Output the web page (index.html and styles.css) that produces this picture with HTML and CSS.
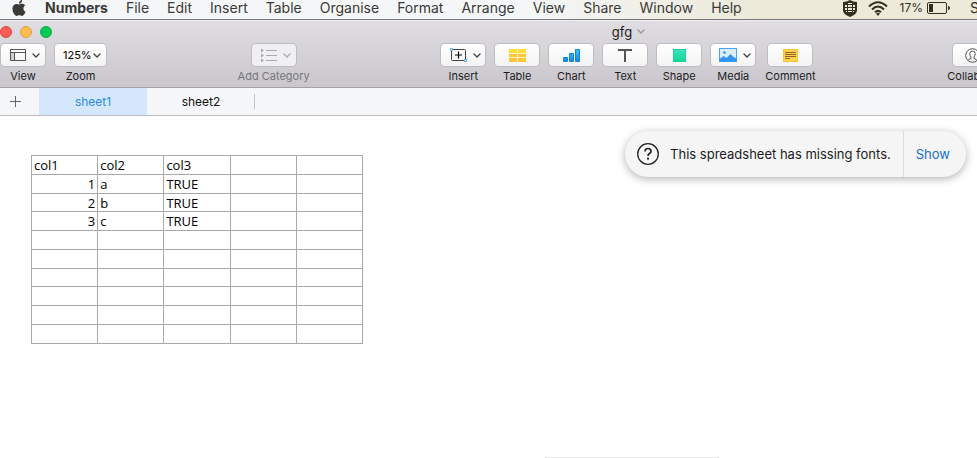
FILE: index.html
```
<!DOCTYPE html>
<html lang="en">
<head>
  <meta charset="UTF-8" />
  <meta name="viewport" content="width=device-width, initial-scale=1.0"/>
  <title>gfg</title>
  <link rel="stylesheet" href="styles.css">
</head>
<body>
  <svg class="defs" width="0" height="0">
    <symbol id="chevron" viewBox="0 0 8 5">
      <path d="M1 1 L4 4 L7 1" fill="none" stroke="currentColor" stroke-width="1.4" stroke-linecap="round" stroke-linejoin="round"/>
    </symbol>
  </svg>

  <nav class="menubar">
    <button class="menu apple" aria-label="Apple">
      <svg width="16" height="16" viewBox="0 0 24 24" fill="currentColor">
        <path d="M12.152 6.896c-.948 0-2.415-1.078-3.96-1.04-2.04.027-3.91 1.183-4.961 3.014-2.117 3.675-.546 9.103 1.519 12.09 1.013 1.454 2.208 3.09 3.792 3.039 1.52-.065 2.09-.987 3.935-.987 1.831 0 2.35.987 3.96.948 1.637-.026 2.676-1.48 3.676-2.948 1.156-1.688 1.636-3.325 1.662-3.415-.039-.013-3.182-1.221-3.22-4.857-.026-3.04 2.48-4.494 2.597-4.559-1.429-2.09-3.623-2.324-4.39-2.376-2-.156-3.675 1.09-4.61 1.09zM15.53 3.83c.843-1.012 1.4-2.427 1.245-3.83-1.207.052-2.662.805-3.532 1.818-.78.896-1.454 2.338-1.273 3.714 1.338.104 2.715-.688 3.559-1.701"/>
      </svg>
    </button>
    <button class="menu app-name">Numbers</button>
    <button class="menu">File</button>
    <button class="menu">Edit</button>
    <button class="menu">Insert</button>
    <button class="menu">Table</button>
    <button class="menu">Organise</button>
    <button class="menu">Format</button>
    <button class="menu">Arrange</button>
    <button class="menu">View</button>
    <button class="menu">Share</button>
    <button class="menu">Window</button>
    <button class="menu">Help</button>

    <div class="status">
      <svg width="14" height="17" viewBox="0 0 14 17">
        <path d="M7 0 Q10 2 14 2 V10.500 Q14 14 7 17 Q0 14 0 10.500 V2 Q4 2 7 0Z" fill="#33301f"/>
        <path d="M2 5h2v2H2z M5 5h4v2H5z M10 5h2v2h-2z M2 8h2v2H2z M5 8h4v2H5z M10 8h2v2h-2z M3 11h1v1H3z M5 11h4v1H5z M10 11h1v1h-1z M5 3h4v1H5z" fill="#ece8d6"/>
      </svg>
      <svg class="wifi" width="20" height="15" viewBox="0 0 20 15" fill="none" stroke="#33301f" stroke-width="2">
        <path d="M1 5.5 Q10 -3 19 5.5 M4 8.5 Q10 2.5 16 8.5 M7 11.3 Q10 8.5 13 11.3"/>
        <path d="M8 12.5 Q10 11 12 12.5 L10 15Z" fill="#33301f" stroke="none"/>
      </svg>
      <span class="percent">17%</span>
      <svg class="battery" width="23" height="12" viewBox="0 0 23 12">
        <rect x="0.5" y="0.5" width="19" height="11" rx="1.5" fill="none" stroke="#33301f"/>
        <rect x="2" y="2" width="4" height="8" fill="#33301f"/>
        <path d="M21 4 Q23 4 23 6 Q23 8 21 8Z" fill="#33301f"/>
      </svg>
      <span class="clock">S</span>
    </div>
  </nav>

  <header class="window-head">
    <div class="titlebar">
      <div class="lights">
        <button class="light close" aria-label="Close"></button>
        <button class="light minimise" aria-label="Minimise"></button>
        <button class="light zoom" aria-label="Full screen"></button>
      </div>
      <button class="doc-title">gfg <svg width="8" height="5"><use href="#chevron"/></svg></button>
    </div>

    <div class="toolbar">
      <div class="group">
        <div class="tool">
          <button id="view" class="tool-button dropdown">
            <svg width="16" height="12" viewBox="0 0 16 12">
              <rect x="1" y="4" width="3" height="7" fill="#cfcfcf"/>
              <path d="M0.5 0.5h15v11h-15z M0.5 3.5h15 M4.5 3.5v8" fill="none" stroke="#555"/>
            </svg>
            <svg class="chevron" width="8" height="5"><use href="#chevron"/></svg>
          </button>
          <label for="view">View</label>
        </div>
        <div class="tool">
          <div class="zoom-box">
            <select id="zoom" class="tool-button">
              <option>125%</option>
            </select>
            <svg class="chevron" width="8" height="5"><use href="#chevron"/></svg>
          </div>
          <label for="zoom">Zoom</label>
        </div>
      </div>

      <div class="tool disabled">
        <button id="category" class="tool-button dropdown" disabled>
          <svg width="16" height="14" viewBox="0 0 16 14">
            <path d="M5 2.5h11 M5 7.5h11 M5 12.5h11" stroke="#aaa"/>
            <path d="M0 0.5l3 2l-3 2z M0 5.5l3 2l-3 2z M0 10.5l3 2l-3 2z" fill="#aaa"/>
          </svg>
          <svg class="chevron" width="8" height="5"><use href="#chevron"/></svg>
        </button>
        <label for="category">Add Category</label>
      </div>

      <div class="group">
        <div class="tool">
          <button id="insert" class="tool-button dropdown">
            <svg width="17" height="14" viewBox="0 0 17 14">
              <rect x="1.5" y="1.5" width="14" height="11" rx="1" fill="none" stroke="#444"/>
              <path d="M8.5 3.5v7 M5 7h7" stroke="#000" stroke-width="1.2"/>
              <circle cx="1.5" cy="1.5" r="1.2" fill="#fff" stroke="#1a8cf0"/>
              <circle cx="15.5" cy="12.5" r="1.2" fill="#fff" stroke="#1a8cf0"/>
            </svg>
            <svg class="chevron" width="8" height="5"><use href="#chevron"/></svg>
          </button>
          <label for="insert">Insert</label>
        </div>
        <div class="tool">
          <button id="table" class="tool-button">
            <svg width="17" height="13" viewBox="0 0 17 13">
              <rect width="17" height="13" fill="#fcc53a"/>
              <rect width="17" height="5" fill="#fddc38"/>
              <path d="M0 4.5h17 M0 8.5h17 M8.5 0v13" stroke="#fff3bd"/>
            </svg>
          </button>
          <label for="table">Table</label>
        </div>
        <div class="tool">
          <button id="chart" class="tool-button">
            <svg width="17" height="13" viewBox="0 0 17 13">
              <linearGradient id="bars" x1="0" y1="0" x2="0" y2="13" gradientUnits="userSpaceOnUse">
                <stop offset="0" stop-color="#3fc4f8"/>
                <stop offset="1" stop-color="#0d86e6"/>
              </linearGradient>
              <path d="M0.5 8.5h4v4h-4z M6.5 4.5h4v8h-4z M12.5 0.5h4v12h-4z" fill="url(#bars)" stroke="#1587d6"/>
            </svg>
          </button>
          <label for="chart">Chart</label>
        </div>
        <div class="tool">
          <button id="text" class="tool-button">
            <svg width="14" height="13" viewBox="0 0 14 13">
              <path d="M0 1h14 M7 1v12" fill="none" stroke="#555" stroke-width="2"/>
            </svg>
          </button>
          <label for="text">Text</label>
        </div>
        <div class="tool">
          <button id="shape" class="tool-button">
            <svg width="13" height="13" viewBox="0 0 13 13">
              <linearGradient id="green" x1="0" y1="0" x2="0" y2="1">
                <stop offset="0" stop-color="#3fe0be"/>
                <stop offset="1" stop-color="#13d894"/>
              </linearGradient>
              <rect x="0.5" y="0.5" width="12" height="12" fill="url(#green)" stroke="#20cf9c"/>
            </svg>
          </button>
          <label for="shape">Shape</label>
        </div>
        <div class="tool">
          <button id="media" class="tool-button dropdown">
            <svg width="18" height="14" viewBox="0 0 18 14">
              <rect x="0.5" y="0.5" width="17" height="13" fill="#dceefd" stroke="#4aa3f5"/>
              <path d="M0.5 13.5V11l4-3 3 2 4-4 3 3 3 1.5v3z" fill="#2f93f7"/>
              <circle cx="5.5" cy="4.5" r="1.5" fill="#4aa3f5"/>
            </svg>
            <svg class="chevron" width="8" height="5"><use href="#chevron"/></svg>
          </button>
          <label for="media">Media</label>
        </div>
        <div class="tool">
          <button id="comment" class="tool-button">
            <svg width="15" height="13" viewBox="0 0 15 13">
              <rect x="0.5" y="0.5" width="14" height="12" fill="#fed24a" stroke="#f3c33b"/>
              <path d="M2 3.5h11 M2 5.5h11 M2 7.5h11 M2 9.5h5" stroke="#94642a"/>
            </svg>
          </button>
          <label for="comment">Comment</label>
        </div>
      </div>

      <div class="tool">
        <button id="collaborate" class="tool-button dropdown">
          <svg width="15" height="15" viewBox="0 0 15 15" fill="none" stroke="#555">
            <circle cx="7.5" cy="7.5" r="6.8"/>
            <path d="M3 12.5 Q3.5 11 6 10.5 V9 Q4.8 7.500 4.800 5.500 Q5 3 7.500 3 Q10 3 10.200 5.500 Q10.200 7.500 9 9 V10.500 Q11.500 11 12 12.500"/>
          </svg>
          <svg class="chevron" width="8" height="5"><use href="#chevron"/></svg>
        </button>
        <label for="collaborate">Collaborate</label>
      </div>
    </div>
  </header>

  <nav class="sheets">
    <button class="add-sheet" aria-label="Add sheet">
      <svg width="13" height="13" viewBox="0 0 13 13"><path d="M6.500 1v11 M1 6.500h11" stroke="#666"/></svg>
    </button>
    <button class="sheet active">sheet1</button>
    <button class="sheet">sheet2</button>
  </nav>

  <main class="canvas">
    <table class="grid">
      <tbody>
        <tr><th scope="col">col1</th><th scope="col">col2</th><th scope="col">col3</th><th></th><th></th></tr>
        <tr><td class="number">1</td><td>a</td><td>TRUE</td><td></td><td></td></tr>
        <tr><td class="number">2</td><td>b</td><td>TRUE</td><td></td><td></td></tr>
        <tr><td class="number">3</td><td>c</td><td>TRUE</td><td></td><td></td></tr>
        <tr><td></td><td></td><td></td><td></td><td></td></tr>
        <tr><td></td><td></td><td></td><td></td><td></td></tr>
        <tr><td></td><td></td><td></td><td></td><td></td></tr>
        <tr><td></td><td></td><td></td><td></td><td></td></tr>
        <tr><td></td><td></td><td></td><td></td><td></td></tr>
        <tr><td></td><td></td><td></td><td></td><td></td></tr>
      </tbody>
    </table>

    <div class="notice" role="status">
      <svg width="22" height="22" viewBox="0 0 22 22" fill="none" stroke="#222">
        <circle cx="11" cy="11" r="10.300" stroke-width="1.300"/>
        <path d="M8 8.500 Q8 5.500 11 5.500 Q14 5.500 14 8.300 Q14 9.700 12.500 10.600 Q11 11.500 11 13" stroke-width="1.700"/>
        <circle cx="11" cy="15.700" r="1.100" fill="#222" stroke="none"/>
      </svg>
      <p class="notice-text">This spreadsheet has missing fonts.</p>
      <button class="show">Show</button>
    </div>

    <div class="bottom-panel"></div>
  </main>
</body>
</html>
```
FILE: styles.css
```
* { box-sizing: border-box; }
body { margin: 0; height: 100vh; display: flex; flex-direction: column; overflow: hidden; background: #fff; color: #1c1c1e; font-family: Inter, "Liberation Sans", sans-serif; font-size: 11px; }
button, select { margin: 0; padding: 0; border: 0; background: none; color: inherit; font: inherit; }
svg { display: block; flex: none; }
.defs { position: absolute; }

.menubar { display: flex; align-items: center; gap: 18px; height: 20px; padding: 0 0 3px 11px; border-bottom: 1px solid #77777a; background: linear-gradient(to right, #f4f6f7 55%, #ece9d8 78%); color: #3a3a38; font-size: 14px; line-height: 16px; white-space: nowrap; }
.app-name { font-weight: 700; }
.status { display: flex; align-items: center; margin-left: auto; color: #33301f; }
.wifi { margin-left: 11px; }
.percent { margin-left: 12px; font-size: 12px; }
.battery { margin-left: 4px; }
.clock { width: 7px; margin-left: 20px; }

.window-head { height: 68px; border-bottom: 1px solid #a3a2a6; background: linear-gradient(#e0dee3, #c9c7cc); box-shadow: inset 0 1px #efeef0; overflow: hidden; }
/* the window runs on past the right edge of the screen */
.titlebar { display: flex; align-items: center; justify-content: center; height: 23px; margin-right: -280px; }
.lights { position: absolute; left: 0; display: flex; gap: 8px; }
.light { width: 12px; height: 12px; border-radius: 50%; }
.close { background: #fc5b57; border: 1px solid #e2463f; }
.minimise { background: #fdbc4f; border: 1px solid #e0a040; }
.zoom { background: #05c956; border: 1px solid #0bb04c; }
.doc-title { display: flex; align-items: center; gap: 5px; font-size: 13px; }
.doc-title svg { color: #99989c; }

.toolbar { display: flex; justify-content: space-between; margin: 1px -30px 0 1px; }
.group { display: flex; gap: 10px; }
.tool { display: flex; flex-direction: column; align-items: center; gap: 3px; line-height: 14px; white-space: nowrap; }
.tool-button { display: flex; align-items: center; justify-content: center; gap: 6px; width: 44px; height: 22px; border-radius: 4px; background: linear-gradient(#fff, #f3f3f4); box-shadow: 0 0 0 1px #bdbcc0; color: #444; }
.dropdown { padding-left: 4px; }
.zoom-box { position: relative; }
.zoom-box .tool-button { width: 51px; padding-left: 8px; appearance: none; color: #000; font-size: 11px; }
.zoom-box .chevron { position: absolute; right: 5px; top: 9px; color: #444; pointer-events: none; }
#collaborate { width: 48px; }
.disabled { color: #77767a; }
.disabled .tool-button { color: #aaa; background: #f0eff1; }

.sheets { display: flex; height: 28px; border-bottom: 1px solid #bdbcc1; background: #f5f6f8; font-size: 12px; }
.add-sheet { width: 39px; padding-left: 9px; }
.sheet { width: 108px; position: relative; color: #111; }
.sheet.active { background: #d4e7fd; color: #2f8ae2; }
.sheet:last-child::after { content: ""; position: absolute; right: 0; top: 6px; bottom: 6px; width: 1px; background: #c4c4c8; }

.canvas { position: relative; flex: 1; padding: 39px 31px; }
.grid { width: 332px; table-layout: fixed; border-collapse: collapse; color: #000; font: 13px/16px "Open Sans", "Noto Sans", sans-serif; }
.grid tr { height: 19px; }
.grid tr:nth-child(4n+3) { height: 18px; }
.grid th, .grid td { padding: 0 2px; border: 1px solid #a9a9a9; font-weight: 400; text-align: left; }
.grid .number { text-align: right; }

.notice { position: absolute; top: 15px; right: 11px; display: flex; align-items: center; height: 46px; padding-left: 12px; border-radius: 23px; background: #f5f5f5; box-shadow: 0 2px 8px rgba(0, 0, 0, 0.3); font-size: 13px; }
.notice-text { margin: 0 12px 0 11px; }
.show { align-self: stretch; padding: 0 16px 0 12px; border-left: 1px solid #dcdcdc; color: #1470cc; }

.bottom-panel { position: absolute; left: 545px; bottom: 0; width: 174px; height: 1px; background: #e8e8e8; }
```
